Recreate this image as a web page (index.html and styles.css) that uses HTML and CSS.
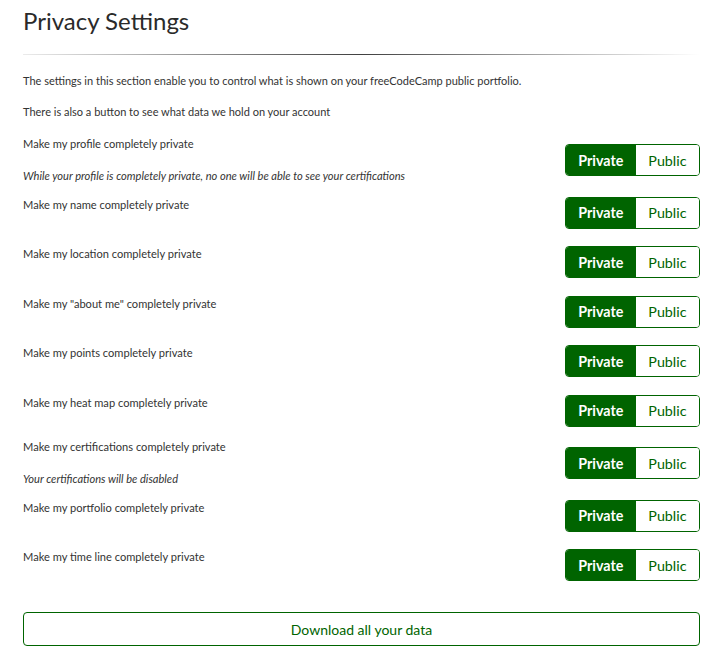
FILE: index.html
```html
<!DOCTYPE html>
<html>
<head>
<meta charset="utf-8">
<link rel="stylesheet" href="styles.css">
</head>
<body>
<main class="page">
  <h2 class="title">Privacy Settings</h2>
  <hr class="fancy">
  <p class="intro">The settings in this section enable you to control what is shown on your freeCodeCamp public portfolio.</p>
  <p class="intro">There is also a button to see what data we hold on your account</p>
  <div class="settings">
    <div class="setting has-note">
      <div class="label-col">
        <p class="label">Make my profile completely private</p>
        <p class="note">While your profile is completely private, no one will be able to see your certifications</p>
      </div>
      <div class="toggle"><span class="opt on">Private</span><span class="opt">Public</span></div>
    </div>
    <div class="setting">
      <div class="label-col"><p class="label">Make my name completely private</p></div>
      <div class="toggle"><span class="opt on">Private</span><span class="opt">Public</span></div>
    </div>
    <div class="setting">
      <div class="label-col"><p class="label">Make my location completely private</p></div>
      <div class="toggle"><span class="opt on">Private</span><span class="opt">Public</span></div>
    </div>
    <div class="setting">
      <div class="label-col"><p class="label">Make my "about me" completely private</p></div>
      <div class="toggle"><span class="opt on">Private</span><span class="opt">Public</span></div>
    </div>
    <div class="setting">
      <div class="label-col"><p class="label">Make my points completely private</p></div>
      <div class="toggle"><span class="opt on">Private</span><span class="opt">Public</span></div>
    </div>
    <div class="setting">
      <div class="label-col"><p class="label">Make my heat map completely private</p></div>
      <div class="toggle"><span class="opt on">Private</span><span class="opt">Public</span></div>
    </div>
    <div class="setting has-note">
      <div class="label-col">
        <p class="label">Make my certifications completely private</p>
        <p class="note">Your certifications will be disabled</p>
      </div>
      <div class="toggle"><span class="opt on">Private</span><span class="opt">Public</span></div>
    </div>
    <div class="setting">
      <div class="label-col"><p class="label">Make my portfolio completely private</p></div>
      <div class="toggle"><span class="opt on">Private</span><span class="opt">Public</span></div>
    </div>
    <div class="setting">
      <div class="label-col"><p class="label">Make my time line completely private</p></div>
      <div class="toggle"><span class="opt on">Private</span><span class="opt">Public</span></div>
    </div>
  </div>
  <button class="download">Download all your data</button>
</main>
</body>
</html>
```

FILE: styles.css
```css
html, body {
  margin: 0;
  padding: 0;
  background: #fff;
}
body {
  font-family: Lato, "Open Sans", sans-serif;
  color: #333;
}
.page {
  padding: 0 22px 0 23px;
}
.title {
  margin: 0;
  padding-top: 6px;
  font-size: 24px;
  line-height: 30px;
  font-weight: 400;
  color: #2a2a2a;
}
.fancy {
  border: 0;
  height: 1px;
  margin: 18px 0 18px;
  background-image: linear-gradient(to right, rgba(0,0,0,0.08), rgba(0,0,0,0.75), rgba(0,0,0,0));
}
.intro {
  margin: 0 0 15px;
  font-size: 11px;
  line-height: 16px;
}
.settings {
  display: flex;
  flex-direction: column;
  gap: 17.5px;
  padding-top: 6px;
}
.setting {
  display: flex;
  align-items: center;
  justify-content: space-between;
}
.setting.has-note {
  margin: -5px 0;
}
.label-col {
  display: flex;
  flex-direction: column;
}
.label {
  margin: 0 0 16px;
  font-size: 11.1px;
  line-height: 16px;
}
.note {
  margin: 0;
  font-size: 11.1px;
  line-height: 16px;
  font-style: italic;
}
.toggle {
  display: flex;
  height: 32px;
  border: 1px solid #006400;
  border-radius: 4px;
  overflow: hidden;
  box-sizing: border-box;
}
.opt {
  display: flex;
  align-items: center;
  padding: 0 12.5px;
  font-size: 14.3px;
  color: #006400;
  background: #fff;
}
.opt.on {
  background: #006400;
  color: #fff;
  font-weight: 700;
  padding: 0 12.5px;
}
.download {
  display: block;
  width: 100%;
  height: 34px;
  margin-top: 31px;
  background: #fff;
  border: 1px solid #006400;
  border-radius: 4px;
  color: #006400;
  font-family: Lato, "Open Sans", sans-serif;
  font-size: 14px;
  cursor: pointer;
}
```
